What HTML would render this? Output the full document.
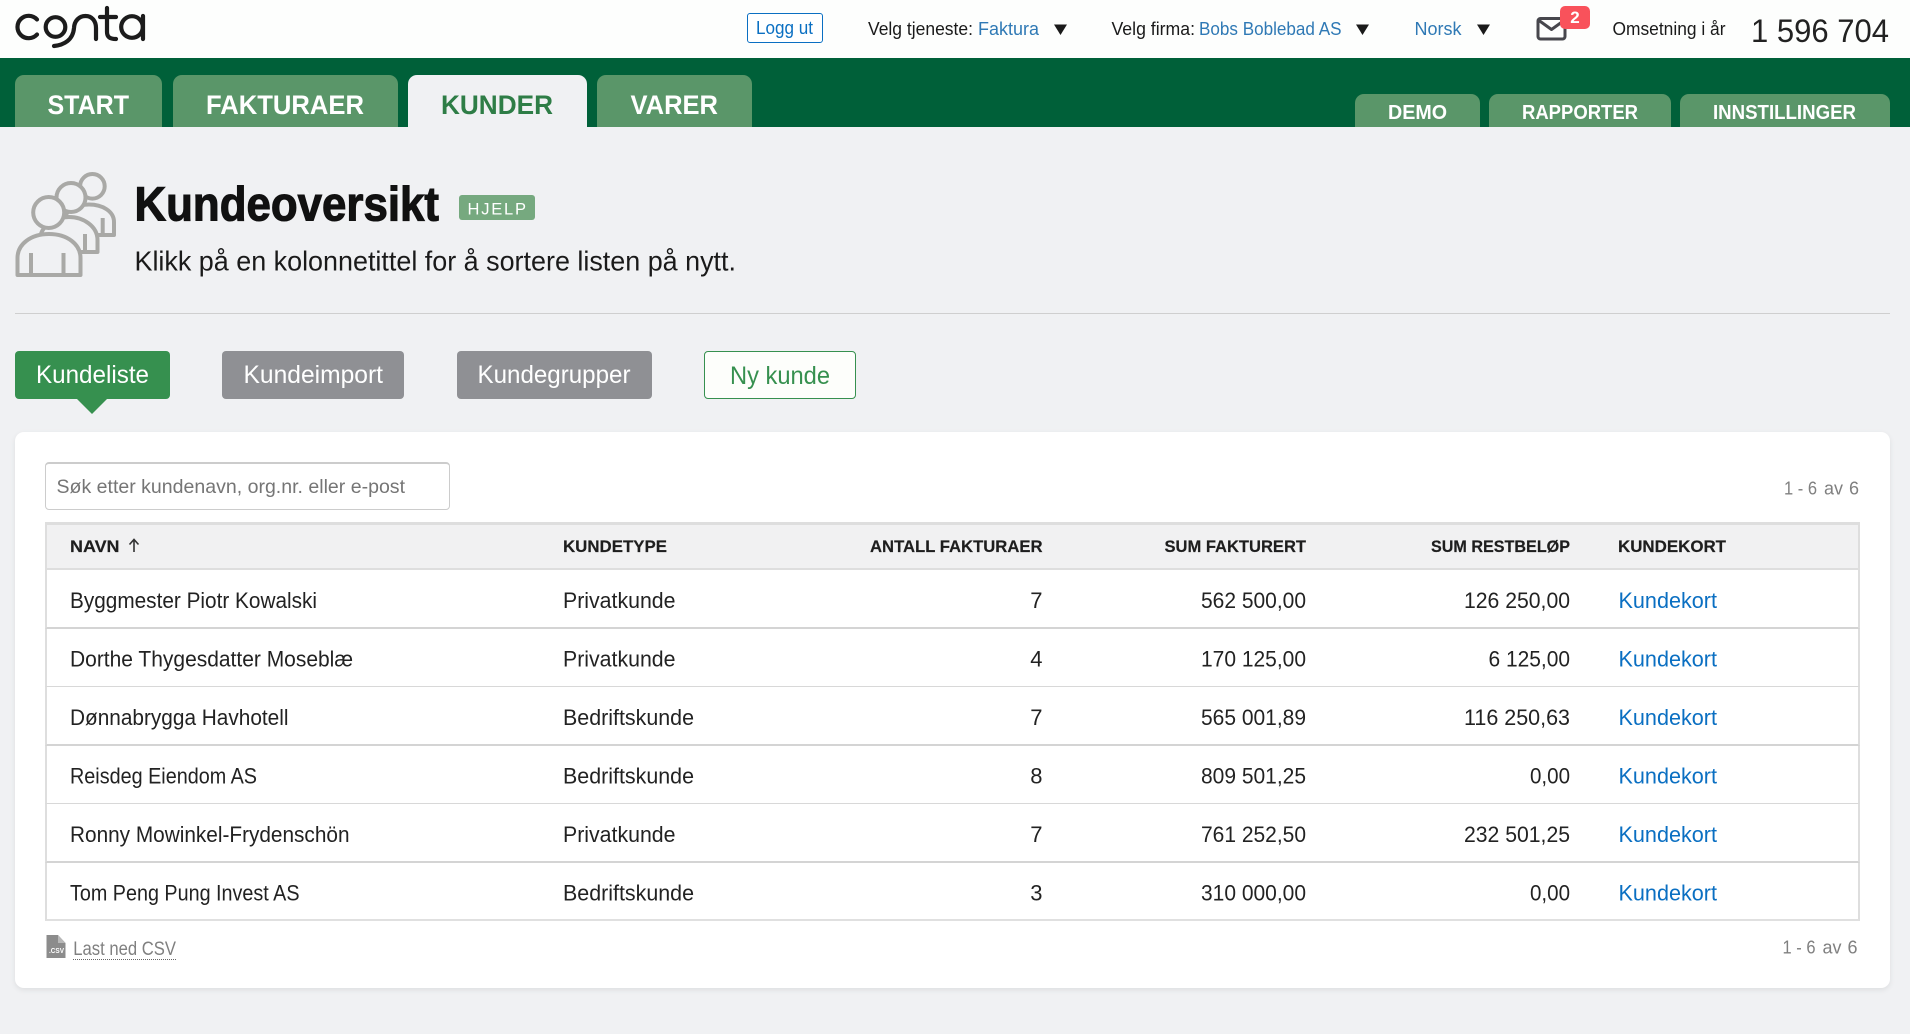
<!DOCTYPE html>
<html lang="no"><head><meta charset="utf-8"><title>Kundeoversikt</title>
<style>
html,body{margin:0;padding:0;width:1910px;height:1034px;overflow:hidden;background:#f0f1f3;font-family:"Liberation Sans",sans-serif}
.b{position:absolute;box-sizing:border-box}
svg.o{position:absolute;left:0;top:0}
text{font-family:"Liberation Sans",sans-serif}
.tab{background:#5a9669;border-radius:9px 9px 0 0;top:75px;height:52px}
.tab2{background:#5a9669;border-radius:9px 9px 0 0;top:94px;height:33px}
.btn{top:351px;height:48px;border-radius:4px;background:#8f9094}
.row{left:45px;width:1815px;height:59px;border-left:2px solid #dedede;border-right:2px solid #dedede;border-bottom:2px solid #d4d4d4;background:#fff}
.h{font-size:27px;font-weight:700;fill:#fff}
.h2{font-size:20px;font-weight:700;fill:#fff}
.t{font-size:18px;fill:#1a1a1a}
.bl{font-size:18px;fill:#2f79b5}
.btxt{font-size:25px;fill:#fff}
.th{font-size:17px;font-weight:700;fill:#1e1e1e;stroke:#1e1e1e;stroke-width:.2px}
.td{font-size:22px;fill:#222}
.k{font-size:22px;fill:#0a6fc2}
.pg{font-size:18px;fill:#808080}
</style></head><body>
<div class="b" style="left:0;top:0;width:1910px;height:58px;background:#fdfefd"></div>
<div class="b" style="left:0;top:58px;width:1910px;height:69px;background:#006039"></div>
<div class="b tab" style="left:15px;width:147px"></div>
<div class="b tab" style="left:173px;width:225px"></div>
<div class="b tab" style="left:408px;width:179px;background:#f0f1f3"></div>
<div class="b tab" style="left:597px;width:155px"></div>
<div class="b tab2" style="left:1355px;width:125px"></div>
<div class="b tab2" style="left:1489px;width:182px"></div>
<div class="b tab2" style="left:1680px;width:210px"></div>
<div class="b" style="left:747px;top:13px;width:76px;height:30px;border:1px solid #0a6fc2;border-radius:3px;background:#fff"></div>
<div class="b" style="left:459px;top:195px;width:76px;height:25px;background:#76a97f;border-radius:3px"></div>
<div class="b" style="left:15px;top:313px;width:1875px;border-top:1px solid #cfcfcf"></div>
<div class="b btn" style="left:15px;width:155px;background:#36904f"></div>
<div class="b" style="left:77px;top:399px;width:0;height:0;border-left:15px solid transparent;border-right:15px solid transparent;border-top:15px solid #36904f"></div>
<div class="b btn" style="left:222px;width:182px"></div>
<div class="b btn" style="left:457px;width:195px"></div>
<div class="b btn" style="left:704px;width:152px;background:#fdfefb;border:1px solid #36904f"></div>
<div class="b" style="left:15px;top:432px;width:1875px;height:556px;background:#fff;border-radius:9px;box-shadow:0 2px 6px rgba(0,0,0,.08)"></div>
<div class="b" style="left:45px;top:462px;width:405px;height:48px;background:#fff;border:1px solid #ccc;border-top:2px solid #ccc;border-radius:4px"></div>
<div class="b" style="left:45px;top:522px;width:1815px;height:48px;background:#f1f1f2;border:2px solid #dedede;border-top-width:3px"></div>
<div class="b row" style="top:570px"></div>
<div class="b row" style="top:629px;border-bottom:1px solid #d8d8d8;height:58px"></div>
<div class="b row" style="top:687px;height:59px"></div>
<div class="b row" style="top:746px;border-bottom:1px solid #d8d8d8;height:58px"></div>
<div class="b row" style="top:804px;height:59px"></div>
<div class="b row" style="top:863px;height:58px;border-bottom-color:#e0e0e0"></div>
<svg class="o" width="1910" height="1034" viewBox="0 0 1910 1034" style="z-index:3">
<!-- logo -->
<g fill="none" stroke="#1c1c1c" stroke-width="4.200" stroke-linecap="round">
<path d="M37 19.500A11.200 11.200 0 1 0 37 34.500"/>
<circle cx="55.500" cy="27" r="9.800"/>
<path d="M54 46c10-1 19-6 20-18c.3-7 5-12 11.500-12s10.500 5 10.500 12v11"/>
<path d="M107 8v24c0 5 3 7 9 7M100 17h16"/>
<circle cx="132" cy="27" r="10.800"/><path d="M143 16v23"/>
</g>
<!-- header -->
<text x="756" y="34" class="bl" style="fill:#0a6fc2" textLength="57" lengthAdjust="spacingAndGlyphs">Logg ut</text>
<text x="868" y="35" class="t" textLength="105" lengthAdjust="spacingAndGlyphs">Velg tjeneste:</text>
<text x="978" y="35" class="bl" textLength="61" lengthAdjust="spacingAndGlyphs">Faktura</text>
<path d="M1054 24.500h13l-6.500 10.500z" fill="#1a1a1a"/>
<text x="1111.500" y="35" class="t" textLength="83.500" lengthAdjust="spacingAndGlyphs">Velg firma:</text>
<text x="1199" y="35" class="bl" textLength="142.500" lengthAdjust="spacingAndGlyphs">Bobs Boblebad AS</text>
<path d="M1356 24.500h13l-6.500 10.500z" fill="#1a1a1a"/>
<text x="1414.500" y="35" class="bl" textLength="47" lengthAdjust="spacingAndGlyphs">Norsk</text>
<path d="M1477 24.500h13l-6.500 10.500z" fill="#1a1a1a"/>
<g fill="none" stroke="#47474d" stroke-width="3" stroke-linejoin="round"><rect x="1538" y="18.500" width="27" height="20.500" rx="2.500"/><path d="M1539 20.500l12.500 9 12.500-9"/></g>
<rect x="1560" y="6" width="30" height="23" rx="5" fill="#f9525b"/>
<text x="1575" y="23" text-anchor="middle" font-size="17" font-weight="700" fill="#fff">2</text>
<text x="1612.500" y="35" class="t" textLength="113" lengthAdjust="spacingAndGlyphs">Omsetning i år</text>
<text x="1751" y="42" font-size="32" fill="#222" textLength="138" lengthAdjust="spacingAndGlyphs">1 596 704</text>
<!-- tabs -->
<text x="47.500" y="114" class="h" textLength="81.500" lengthAdjust="spacingAndGlyphs">START</text>
<text x="206" y="114" class="h" textLength="158" lengthAdjust="spacingAndGlyphs">FAKTURAER</text>
<text x="441" y="114" class="h" style="fill:#2e7d46" textLength="112" lengthAdjust="spacingAndGlyphs">KUNDER</text>
<text x="630.500" y="114" class="h" textLength="87.500" lengthAdjust="spacingAndGlyphs">VARER</text>
<text x="1388" y="119" class="h2" textLength="59" lengthAdjust="spacingAndGlyphs">DEMO</text>
<text x="1522" y="119" class="h2" textLength="116" lengthAdjust="spacingAndGlyphs">RAPPORTER</text>
<text x="1713" y="119" class="h2" textLength="143" lengthAdjust="spacingAndGlyphs">INNSTILLINGER</text>
<!-- people icon -->
<g fill="#f0f1f3" stroke="#a9a9a6" stroke-width="4" stroke-linejoin="round">
<path d="M64 235V222C64 211 76 204.500 89 204.500S114 211 114 222V235Z"/>
<path d="M102.700 218V235" fill="none"/>
<circle cx="92.400" cy="186.300" r="12.300"/>
<path d="M40 252V240C40 226 55 217 69 217S97.500 226 97.500 240V252Z"/>
<path d="M85 234V252" fill="none"/>
<circle cx="71" cy="197.500" r="14.500"/>
<path d="M17.500 275V258C17.500 244 31 234 49 234S80.500 244 80.500 258V275Z"/>
<path d="M31 253V275M63.500 253V275" fill="none"/>
<circle cx="48.700" cy="212.500" r="15.500"/>
</g>
<text x="134.500" y="220.500" font-size="48" font-weight="700" fill="#111" stroke="#111" stroke-width="1.100" textLength="304.500" lengthAdjust="spacingAndGlyphs">Kundeoversikt</text>
<text x="467.500" y="214.500" font-size="16.500" fill="#fff" textLength="58.500" lengthAdjust="spacing">HJELP</text>
<text x="134.500" y="270.500" font-size="27.500" fill="#1a1a1a" textLength="601.500" lengthAdjust="spacingAndGlyphs">Klikk på en kolonnetittel for å sortere listen på nytt.</text>
<!-- buttons -->
<text x="36" y="383" class="btxt" textLength="113" lengthAdjust="spacingAndGlyphs">Kundeliste</text>
<text x="243.500" y="383" class="btxt" textLength="139.500" lengthAdjust="spacingAndGlyphs">Kundeimport</text>
<text x="477.500" y="383" class="btxt" textLength="153" lengthAdjust="spacingAndGlyphs">Kundegrupper</text>
<text x="730" y="384" class="btxt" style="fill:#36904f" textLength="100" lengthAdjust="spacingAndGlyphs">Ny kunde</text>
<!-- search -->
<text x="56.500" y="493" font-size="19.500" fill="#757575" textLength="348.500" lengthAdjust="spacingAndGlyphs">Søk etter kundenavn, org.nr. eller e-post</text>
<text x="1784" y="494.500" class="pg" textLength="33" lengthAdjust="spacingAndGlyphs">1 - 6</text>
<text x="1824" y="494.500" class="pg" textLength="19" lengthAdjust="spacingAndGlyphs">av</text>
<text x="1849" y="494.500" class="pg">6</text>
<!-- table head -->
<text x="70" y="552" class="th" textLength="49.500" lengthAdjust="spacingAndGlyphs">NAVN</text>
<path d="M134 552v-12M129.500 544.500l4.500-5 4.500 5" fill="none" stroke="#333" stroke-width="1.600"/>
<text x="563" y="552" class="th" textLength="104" lengthAdjust="spacingAndGlyphs">KUNDETYPE</text>
<text x="870" y="552" class="th" textLength="172.500" lengthAdjust="spacingAndGlyphs">ANTALL FAKTURAER</text>
<text x="1164.500" y="552" class="th" textLength="141.500" lengthAdjust="spacingAndGlyphs">SUM FAKTURERT</text>
<text x="1431" y="552" class="th" textLength="139" lengthAdjust="spacingAndGlyphs">SUM RESTBELØP</text>
<text x="1618" y="552" class="th" textLength="108" lengthAdjust="spacingAndGlyphs">KUNDEKORT</text>
<!-- rows -->
<g>
<text x="70" y="608" class="td" textLength="247" lengthAdjust="spacingAndGlyphs">Byggmester Piotr Kowalski</text>
<text x="563" y="608" class="td" textLength="112.500" lengthAdjust="spacingAndGlyphs">Privatkunde</text>
<text x="1042.500" y="608" class="td" text-anchor="end">7</text>
<text x="1201" y="608" class="td" textLength="105" lengthAdjust="spacingAndGlyphs">562 500,00</text>
<text x="1464" y="608" class="td" textLength="106" lengthAdjust="spacingAndGlyphs">126 250,00</text>
<text x="1618.500" y="608" class="k" textLength="98.500" lengthAdjust="spacingAndGlyphs">Kundekort</text>

<text x="70" y="666.500" class="td" textLength="283" lengthAdjust="spacingAndGlyphs">Dorthe Thygesdatter Moseblæ</text>
<text x="563" y="666.500" class="td" textLength="112.500" lengthAdjust="spacingAndGlyphs">Privatkunde</text>
<text x="1042.500" y="666.500" class="td" text-anchor="end">4</text>
<text x="1201" y="666.500" class="td" textLength="105" lengthAdjust="spacingAndGlyphs">170 125,00</text>
<text x="1488.500" y="666.500" class="td" textLength="81.500" lengthAdjust="spacingAndGlyphs">6 125,00</text>
<text x="1618.500" y="666.500" class="k" textLength="98.500" lengthAdjust="spacingAndGlyphs">Kundekort</text>

<text x="70" y="725" class="td" textLength="218.500" lengthAdjust="spacingAndGlyphs">Dønnabrygga Havhotell</text>
<text x="563" y="725" class="td" textLength="131" lengthAdjust="spacingAndGlyphs">Bedriftskunde</text>
<text x="1042.500" y="725" class="td" text-anchor="end">7</text>
<text x="1201" y="725" class="td" textLength="105" lengthAdjust="spacingAndGlyphs">565 001,89</text>
<text x="1464" y="725" class="td" textLength="106" lengthAdjust="spacingAndGlyphs">116 250,63</text>
<text x="1618.500" y="725" class="k" textLength="98.500" lengthAdjust="spacingAndGlyphs">Kundekort</text>

<text x="70" y="783.500" class="td" textLength="187" lengthAdjust="spacingAndGlyphs">Reisdeg Eiendom AS</text>
<text x="563" y="783.500" class="td" textLength="131" lengthAdjust="spacingAndGlyphs">Bedriftskunde</text>
<text x="1042.500" y="783.500" class="td" text-anchor="end">8</text>
<text x="1201" y="783.500" class="td" textLength="105" lengthAdjust="spacingAndGlyphs">809 501,25</text>
<text x="1530" y="783.500" class="td" textLength="40" lengthAdjust="spacingAndGlyphs">0,00</text>
<text x="1618.500" y="783.500" class="k" textLength="98.500" lengthAdjust="spacingAndGlyphs">Kundekort</text>

<text x="70" y="842" class="td" textLength="279.500" lengthAdjust="spacingAndGlyphs">Ronny Mowinkel-Frydenschön</text>
<text x="563" y="842" class="td" textLength="112.500" lengthAdjust="spacingAndGlyphs">Privatkunde</text>
<text x="1042.500" y="842" class="td" text-anchor="end">7</text>
<text x="1201" y="842" class="td" textLength="105" lengthAdjust="spacingAndGlyphs">761 252,50</text>
<text x="1464" y="842" class="td" textLength="106" lengthAdjust="spacingAndGlyphs">232 501,25</text>
<text x="1618.500" y="842" class="k" textLength="98.500" lengthAdjust="spacingAndGlyphs">Kundekort</text>

<text x="70" y="900.500" class="td" textLength="229.500" lengthAdjust="spacingAndGlyphs">Tom Peng Pung Invest AS</text>
<text x="563" y="900.500" class="td" textLength="131" lengthAdjust="spacingAndGlyphs">Bedriftskunde</text>
<text x="1042.500" y="900.500" class="td" text-anchor="end">3</text>
<text x="1201" y="900.500" class="td" textLength="105" lengthAdjust="spacingAndGlyphs">310 000,00</text>
<text x="1530" y="900.500" class="td" textLength="40" lengthAdjust="spacingAndGlyphs">0,00</text>
<text x="1618.500" y="900.500" class="k" textLength="98.500" lengthAdjust="spacingAndGlyphs">Kundekort</text>
</g>
<!-- footer -->
<path d="M46.500 935h11.500l7.500 8v15H46.500z" fill="#8c8c8c"/>
<path d="M58 935l7.500 8H58z" fill="#b8b8b8"/>
<text x="49" y="953" font-size="7" font-weight="700" fill="#fff" textLength="15" lengthAdjust="spacingAndGlyphs">.CSV</text>
<text x="73.300" y="955" font-size="19" fill="#808080" textLength="102.700" lengthAdjust="spacingAndGlyphs">Last ned CSV</text>
<path d="M73 959.500h103" stroke="#666" stroke-width="1" stroke-dasharray="1 1"/>
<text x="1782.500" y="953.300" class="pg" textLength="33" lengthAdjust="spacingAndGlyphs">1 - 6</text>
<text x="1822.500" y="953.300" class="pg" textLength="19" lengthAdjust="spacingAndGlyphs">av</text>
<text x="1847.500" y="953.300" class="pg">6</text>
</svg>
</body></html>
